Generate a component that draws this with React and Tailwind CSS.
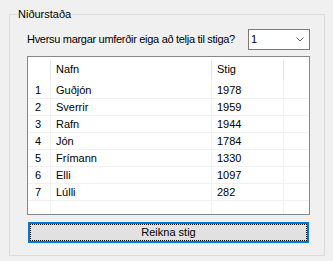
import React from 'react';

const players = [
  { nr: 1, nafn: 'Guðjón', stig: 1978 },
  { nr: 2, nafn: 'Sverrir', stig: 1959 },
  { nr: 3, nafn: 'Rafn', stig: 1944 },
  { nr: 4, nafn: 'Jón', stig: 1784 },
  { nr: 5, nafn: 'Frímann', stig: 1330 },
  { nr: 6, nafn: 'Elli', stig: 1097 },
  { nr: 7, nafn: 'Lúlli', stig: 282 },
];

const Row = ({ nr, nafn, stig }) => (
  <div className="flex h-[17px] border-b border-[#f0f0f0] leading-[16px]">
    <div className="w-[23px] border-r border-[#f0f0f0] pl-[7px]">{nr}</div>
    <div className="w-[161px] border-r border-[#f0f0f0] pl-[5px]">{nafn}</div>
    <div className="w-[72px] border-r border-[#f0f0f0] pl-[5px]">{stig}</div>
    <div className="flex-1"></div>
  </div>
);

const App = () => {
  return (
    <div className="w-[333px] h-[261px] bg-[#f0f0f0] pt-[8px] pl-[9px] font-['Liberation_Sans',Arial,sans-serif] text-[11px] text-black overflow-hidden">
      <fieldset className="w-[316px] h-[248px] border border-[#dcdcdc]">
        <legend className="ml-[7px] px-[1px] leading-[12px]">Niðurstaða</legend>

        <div className="pl-[17px] w-[300px] pt-[9px]">
          <div className="flex items-center justify-between h-[21px]">
            <span className="whitespace-nowrap tracking-[-0.3px]">Hversu margar umferðir eiga að telja til stiga?</span>
            <div className="w-[62px] h-[21px] border border-[#7a7a7a] bg-white flex items-center justify-between pl-[2px] pr-[5px]">
              <span>1</span>
              <svg width="8" height="5" viewBox="0 0 8 5" className="text-[#606060]">
                <path d="M0.5 0.5 L4 4 L7.5 0.5" fill="none" stroke="currentColor" strokeWidth="1" />
              </svg>
            </div>
          </div>

          <div className="mt-[6px] h-[159px] border border-[#828790] bg-white overflow-hidden">
            <div className="flex h-[25px] items-center">
              <div className="w-[22px]"></div>
              <div className="w-[1px] h-[22px] bg-[#e5e5e5]"></div>
              <div className="w-[160px] pl-[5px]">Nafn</div>
              <div className="w-[1px] h-[22px] bg-[#e5e5e5]"></div>
              <div className="w-[71px] pl-[5px]">Stig</div>
              <div className="w-[1px] h-[22px] bg-[#e5e5e5]"></div>
              <div className="flex-1"></div>
            </div>
            {players.map((p) => (
              <Row key={p.nr} {...p} />
            ))}
            <Row nr="" nafn="" stig="" />
          </div>

          <button className="mt-[7px] ml-[1px] w-[281px] h-[21px] border-2 border-[#0078d7] bg-[#e1e1e1] p-0 block">
            <div className="h-full border border-dotted border-black flex items-center justify-center">
              Reikna stig
            </div>
          </button>
        </div>
      </fieldset>
    </div>
  );
};

export default App;
